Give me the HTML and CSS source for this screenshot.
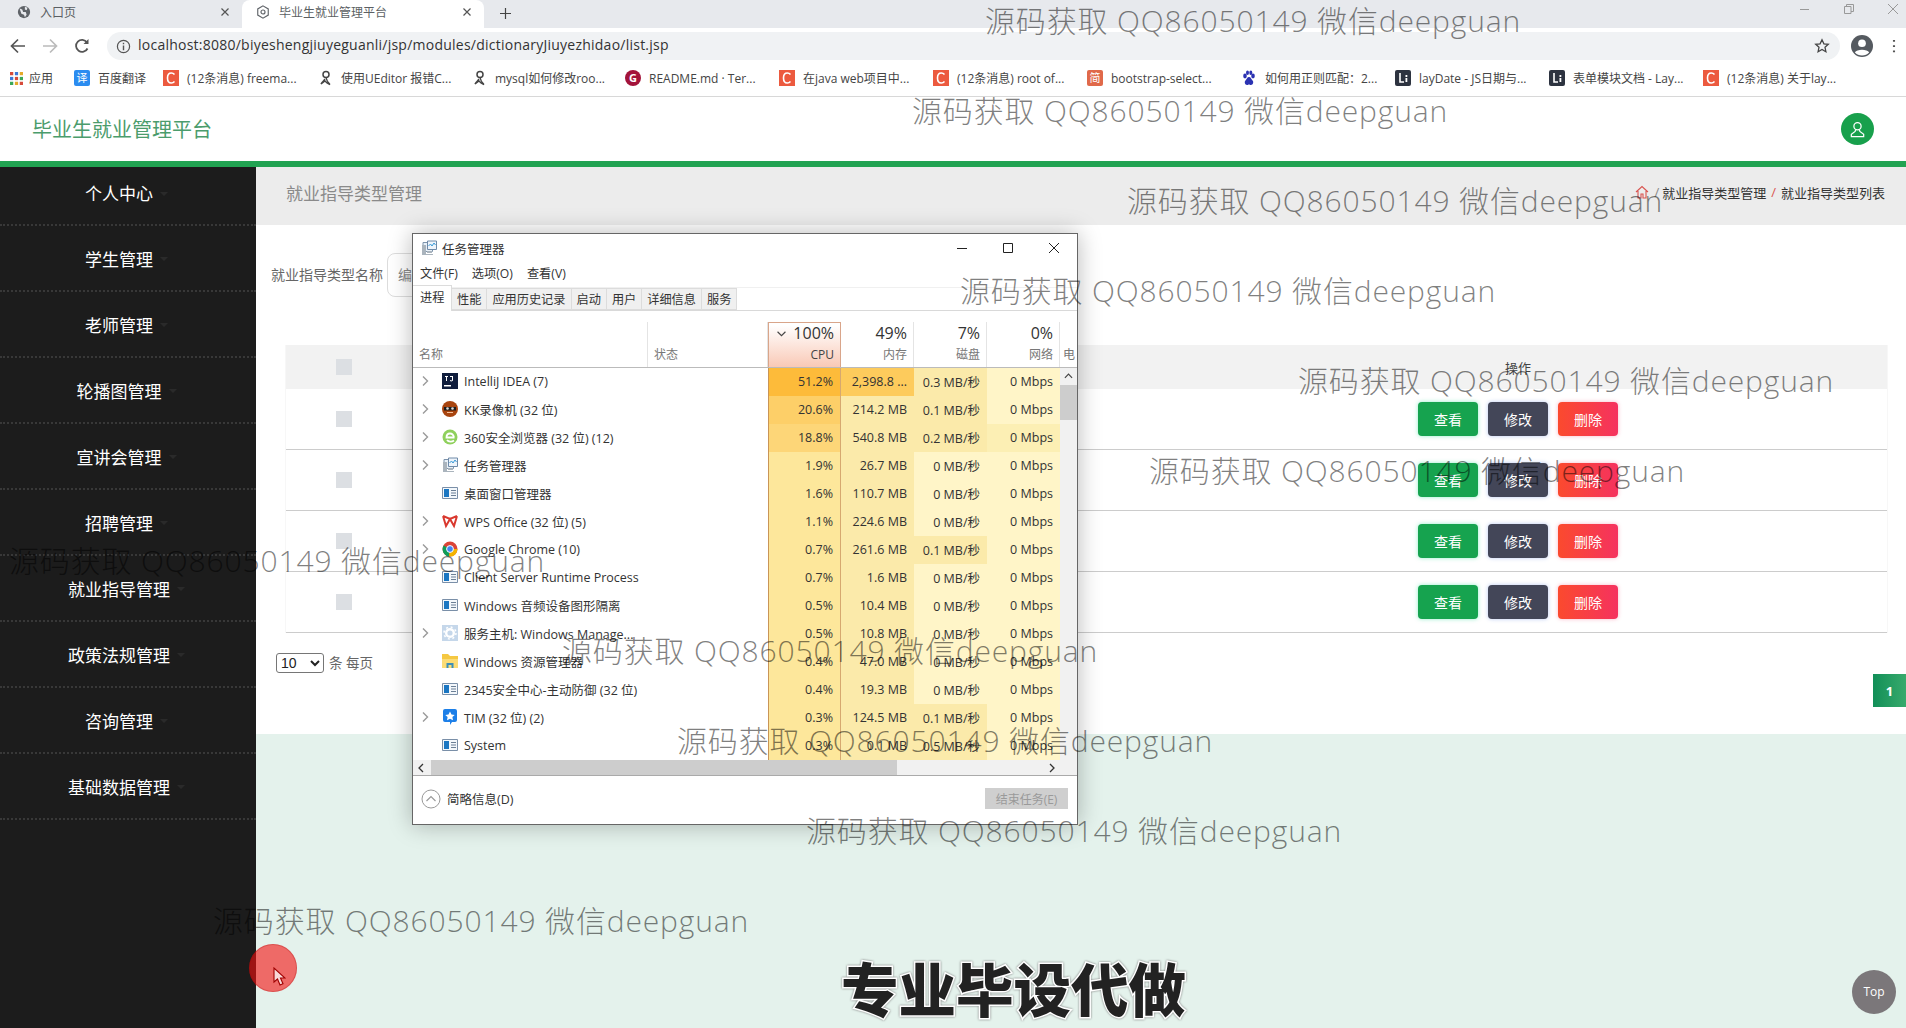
FILE: index.html
```html
<!DOCTYPE html>
<html lang="zh-CN">
<head>
<meta charset="utf-8">
<title>毕业生就业管理平台</title>
<link rel="stylesheet" href="styles.css">
</head>
<body>
<svg class="defs" aria-hidden="true">
  <symbol id="chev" viewBox="0 0 10 12"><path d="M3 1.500 7.500 6 3 10.500" fill="none" stroke="#9a9a9a" stroke-width="1.400"/></symbol>
  <symbol id="close" viewBox="0 0 10 10"><path d="M1.500 1.500l7 7m0-7-7 7" fill="none" stroke="#555" stroke-width="1.200"/></symbol>
  <symbol id="pp" viewBox="0 0 16 16"><path d="M2 2.500h9.500v9H2z" fill="#e8f0f8" stroke="#7d93ab"/><path d="M6.500 1h9v8.500h-9z" fill="#eef4fb" stroke="#6f8aa8"/><path d="M7.500 6l2-2 1.500 2 2-3 1.500 2" fill="none" stroke="#3a9bd8"/><path d="M1 5h4v10H1zM6 11h5v2H6zM5 14h7v1H5z" fill="#aab4bd"/></symbol>
  <symbol id="win" viewBox="0 0 16 16"><path d="M.5 2.500h15v11H.5z" fill="#f3f7fb" stroke="#7a8fa8"/><path d="M2 4h5v8H2z" fill="#1a76c2"/><path d="M9 5h5v1H9zM9 7.500h5v1H9zM9 10h5v1H9z" fill="#6b7f95"/></symbol>
  <symbol id="c" viewBox="0 0 16 16"><path d="M0 0h16v16H0z" fill="#ec5a3f"/><path d="M11.500 4.500C10.600 3.400 9.500 3 8.300 3 6 3 4.500 5 4.500 8s1.500 5 3.800 5c1.200 0 2.300-.4 3.200-1.500" fill="none" stroke="#fff" stroke-width="1.600"/></symbol>
  <symbol id="lay" viewBox="0 0 16 16"><rect width="16" height="16" rx="2" fill="#2d3340"/><path d="M5 3v9h4" fill="none" stroke="#fff" stroke-width="1.600"/><path d="M10.500 5h1.800v2h-1.800zM10.500 8h1.800v4h-1.800z" fill="#fff"/></symbol>
  <symbol id="ue" viewBox="0 0 16 16"><circle cx="9" cy="4.500" r="3" fill="none" stroke="#444" stroke-width="1.500"/><path d="M9 7.500c.5 3 2 5 4 7l-3-1.500-2-2-4 3c1-2 3-3.500 4-5" fill="none" stroke="#444" stroke-width="1.400"/></symbol>
</svg>

<div class="chrome">
  <div class="tabstrip">
    <div class="tab">
      <svg class="fav" viewBox="0 0 16 16"><circle cx="8" cy="8" r="7" fill="#5f6368"/><path d="M3 4l3 1 1 3 3 0 1 3-2 3-1-3-3-1zM9 2l3 1-1 3-2-1z" fill="#e7e9ed"/></svg>
      <span class="tab-title">入口页</span>
      <svg class="tab-x"><use href="#close"/></svg>
    </div>
    <div class="tab tab-on">
      <svg class="fav" viewBox="0 0 16 16"><path d="M8 1l6 3.500v7L8 15l-6-3.500v-7z" fill="none" stroke="#5f6368" stroke-width="1.300"/><circle cx="8" cy="8" r="2.300" fill="none" stroke="#5f6368" stroke-width="1.300"/></svg>
      <span class="tab-title">毕业生就业管理平台</span>
      <svg class="tab-x"><use href="#close"/></svg>
    </div>
    <svg class="plus" viewBox="0 0 12 12"><path d="M6 0v12M0 6h12" stroke="#444" stroke-width="1.300"/></svg>
    <div class="win-ctrls">
      <svg viewBox="0 0 10 10"><path d="M0 5.500h9" stroke="#999"/></svg>
      <svg viewBox="0 0 10 10"><path d="M.5 2.500h6.500v7H.5zM2.500 2.500V.5h7v7H7" fill="none" stroke="#999"/></svg>
      <svg viewBox="0 0 10 10"><path d="M0 0l10 10m0-10L0 10" stroke="#999"/></svg>
    </div>
  </div>
  <div class="toolbar">
    <svg class="nav" viewBox="0 0 16 16"><path d="M15 8H2m6-6.500L1.500 8 8 14.500" fill="none" stroke="#555" stroke-width="1.700"/></svg>
    <svg class="nav" viewBox="0 0 16 16"><path d="M1 8h13M8 1.500 14.500 8 8 14.500" fill="none" stroke="#bbb" stroke-width="1.700"/></svg>
    <svg class="nav nav-last" viewBox="0 0 16 16"><path d="M13.500 10.500A6 6 0 1 1 13 4.500" fill="none" stroke="#555" stroke-width="1.800"/><path d="M14.500 1v5h-5z" fill="#555"/></svg>
    <div class="omnibox">
      <svg class="info" viewBox="0 0 16 16"><circle cx="8" cy="8" r="6.500" fill="none" stroke="#555" stroke-width="1.300"/><path d="M8 7v5M8 4v1.600" stroke="#555" stroke-width="1.500"/></svg>
      <span class="url">localhost:8080/biyeshengjiuyeguanli/jsp/modules/dictionaryJiuyezhidao/list.jsp</span>
      <svg class="star" viewBox="0 0 16 16"><path d="M8 1.800l1.900 4 4.400.5-3.300 3 .9 4.400L8 11.500l-3.900 2.200.9-4.400-3.300-3 4.400-.5z" fill="none" stroke="#444" stroke-width="1.300"/></svg>
    </div>
    <svg class="avatar" viewBox="0 0 20 20"><circle cx="10" cy="10" r="10" fill="#555a60"/><circle cx="10" cy="7.500" r="3.500" fill="#fff"/><path d="M3.500 16c1.500-3.500 11.500-3.500 13 0-3 3.500-10 3.500-13 0z" fill="#fff"/></svg>
    <svg class="dots" viewBox="0 0 4 16"><path d="M2 1v2M2 7v2M2 13v2" stroke="#555" stroke-width="2.400"/></svg>
  </div>
  <div class="bookmarks">
    <div class="bm bm-apps">
      <svg class="bm-ico" viewBox="0 0 12 12"><path d="M0 0h3v3H0z" fill="#d64a3a"/><path d="M4.500 0h3v3h-3z" fill="#3d78d8"/><path d="M9 0h3v3H9z" fill="#e5a92a"/><path d="M0 4.500h3v3H0z" fill="#3d78d8"/><path d="M4.500 4.500h3v3h-3z" fill="#d64a3a"/><path d="M9 4.500h3v3H9z" fill="#3aa757"/><path d="M0 9h3v3H0z" fill="#3aa757"/><path d="M4.500 9h3v3h-3z" fill="#e5a92a"/><path d="M9 9h3v3H9z" fill="#d64a3a"/></svg>
      <span>应用</span>
    </div>
    <div class="bm bm-short"><i class="gl gl-blue">译</i><span>百度翻译</span></div>
    <div class="bm"><svg class="bm-ico"><use href="#c"/></svg><span>(12条消息) freema...</span></div>
    <div class="bm"><svg class="bm-ico"><use href="#ue"/></svg><span>使用UEditor 报错C...</span></div>
    <div class="bm"><svg class="bm-ico"><use href="#ue"/></svg><span>mysql如何修改roo...</span></div>
    <div class="bm"><i class="gl gl-g">G</i><span>README.md · Ter...</span></div>
    <div class="bm"><svg class="bm-ico"><use href="#c"/></svg><span>在java web项目中...</span></div>
    <div class="bm"><svg class="bm-ico"><use href="#c"/></svg><span>(12条消息) root of...</span></div>
    <div class="bm"><i class="gl gl-jian">简</i><span>bootstrap-select...</span></div>
    <div class="bm">
      <svg class="bm-ico" viewBox="0 0 16 16"><g fill="#2b32b2"><ellipse cx="4" cy="6" rx="1.800" ry="2.400"/><ellipse cx="12" cy="6" rx="1.800" ry="2.400"/><ellipse cx="6.500" cy="2.800" rx="1.500" ry="2.200"/><ellipse cx="9.800" cy="2.800" rx="1.500" ry="2.200"/><path d="M8 7c-2 0-2 2-3.500 3.500S4 15 6 15c1 0 1.300-.5 2-.5s1 .5 2 .5c2 0 3-3 1.500-4.500S10 7 8 7z"/></g></svg>
      <span>如何用正则匹配：2...</span>
    </div>
    <div class="bm"><svg class="bm-ico"><use href="#lay"/></svg><span>layDate - JS日期与...</span></div>
    <div class="bm"><svg class="bm-ico"><use href="#lay"/></svg><span>表单模块文档 - Lay...</span></div>
    <div class="bm"><svg class="bm-ico"><use href="#c"/></svg><span>(12条消息) 关于lay...</span></div>
  </div>
</div>

<header class="app-head">
  <div class="brand">毕业生就业管理平台</div>
  <div class="user-badge">
    <svg viewBox="0 0 20 20"><circle cx="10" cy="6.500" r="3.800" fill="none" stroke="#fff" stroke-width="1.300"/><path d="M8 10.500 7.500 12 3.500 15v2.500h13V15l-4-3-.5-1.500" fill="none" stroke="#fff" stroke-width="1.300"/></svg>
  </div>
</header>

<div class="app-body">
  <nav class="side">
    <div class="side-item side-first"><span class="side-label">个人中心</span></div>
    <div class="side-item"><span class="side-label">学生管理</span></div>
    <div class="side-item"><span class="side-label">老师管理</span></div>
    <div class="side-item"><span class="side-label">轮播图管理</span></div>
    <div class="side-item"><span class="side-label">宣讲会管理</span></div>
    <div class="side-item"><span class="side-label">招聘管理</span></div>
    <div class="side-item"><span class="side-label">就业指导管理</span></div>
    <div class="side-item"><span class="side-label">政策法规管理</span></div>
    <div class="side-item"><span class="side-label">咨询管理</span></div>
    <div class="side-item"><span class="side-label">基础数据管理</span></div>
  </nav>
  <main class="main">
    <div class="crumbbar">
      <div class="page-title">就业指导类型管理</div>
      <div class="crumbs">
        <svg class="home" viewBox="0 0 14 14"><path d="M1 7l6-5.500L13 7M3 6v7h3V9h2v4h3V6" fill="none" stroke="#d9534f" stroke-width="1.100"/></svg>
        <span class="sep">/</span><span>就业指导类型管理</span><span class="sep sep-red">/</span><span>就业指导类型列表</span>
      </div>
    </div>
    <section class="panel">
      <div class="search">
        <label class="search-label">就业指导类型名称</label>
        <div class="search-input">编</div>
      </div>
      <div class="table">
        <div class="t-row t-head"><div class="t-check"><i class="check"></i></div><div></div><div class="t-act">操作</div></div>
        <div class="t-row"><div class="t-check"><i class="check"></i></div><div></div><div class="t-act"><a class="btn btn-g">查看</a><a class="btn btn-d">修改</a><a class="btn btn-r">删除</a></div></div>
        <div class="t-row"><div class="t-check"><i class="check"></i></div><div></div><div class="t-act"><a class="btn btn-g">查看</a><a class="btn btn-d">修改</a><a class="btn btn-r">删除</a></div></div>
        <div class="t-row"><div class="t-check"><i class="check"></i></div><div></div><div class="t-act"><a class="btn btn-g">查看</a><a class="btn btn-d">修改</a><a class="btn btn-r">删除</a></div></div>
        <div class="t-row"><div class="t-check"><i class="check"></i></div><div></div><div class="t-act"><a class="btn btn-g">查看</a><a class="btn btn-d">修改</a><a class="btn btn-r">删除</a></div></div>
      </div>
      <div class="pager-size"><select class="size"><option>10</option></select><span>条 每页</span></div>
      <div class="pager"><span class="page-on">1</span></div>
    </section>
    <div class="mint"></div>
  </main>
</div>

<div class="tm">
  <div class="tm-title">
    <svg class="tm-i"><use href="#pp"/></svg><span>任务管理器</span>
    <div class="tm-ctrls">
      <svg viewBox="0 0 12 12"><path d="M1 6.500h10" stroke="#222"/></svg>
      <svg viewBox="0 0 12 12"><path d="M1.500 1.500h9v9h-9z" fill="none" stroke="#222"/></svg>
      <svg viewBox="0 0 12 12"><path d="M1 1l10 10m0-10L1 11" stroke="#222"/></svg>
    </div>
  </div>
  <div class="tm-menu"><span>文件(F)</span><span>选项(O)</span><span>查看(V)</span></div>
  <div class="tm-tabs"><span class="tm-tab tm-tab-on">进程</span><span class="tm-tab">性能</span><span class="tm-tab">应用历史记录</span><span class="tm-tab">启动</span><span class="tm-tab">用户</span><span class="tm-tab">详细信息</span><span class="tm-tab">服务</span></div>
  <div class="tm-head">
    <div class="th th-name"><span class="th-sub">名称</span></div>
    <div class="th th-state"><span class="th-sub">状态</span></div>
    <div class="th th-num th-cpu"><svg class="sort" viewBox="0 0 8 5"><path d="M.5.500 4 4 7.500.500" fill="none" stroke="#444"/></svg><span class="th-pct">100%</span><span class="th-sub th-sub-dark">CPU</span></div>
    <div class="th th-num"><span class="th-pct">49%</span><span class="th-sub">内存</span></div>
    <div class="th th-num"><span class="th-pct">7%</span><span class="th-sub">磁盘</span></div>
    <div class="th th-num"><span class="th-pct">0%</span><span class="th-sub">网络</span></div>
    <div class="th th-last"><span class="th-sub">电</span></div>
  </div>
  <div class="tm-mid">
    <div class="tm-rows">
      <div class="r"><div class="n"><svg class="ch"><use href="#chev"/></svg><svg class="pi" viewBox="0 0 16 16"><path d="M0 0h16v16H0z" fill="#0f1d3c"/><path d="M2 12h7v1.500H2z" fill="#fff"/><path d="M3 3h3v1H5v4H4V4H3zM8 3h3v4c0 1.500-2 1.800-3 1V7c1 .5 2 .5 2 0V4H8z" fill="#fff"/></svg><span>IntelliJ IDEA (7)</span></div><div></div><div class="v cpu h51">51.2%</div><div class="v h-mem1">2,398.8 ...</div><div class="v h2">0.3 MB/秒</div><div class="v h0">0 Mbps</div></div>
      <div class="r"><div class="n"><svg class="ch"><use href="#chev"/></svg><svg class="pi" viewBox="0 0 16 16"><circle cx="8" cy="8" r="8" fill="#a8440f"/><path d="M2 6h12v3.500H2z" fill="#1c1c1c"/><circle cx="5.500" cy="7.500" r="1.300" fill="#ddd"/><circle cx="10.500" cy="7.500" r="1.300" fill="#ddd"/><path d="M5 11.500h6" stroke="#f5c09a"/></svg><span>KK录像机 (32 位)</span></div><div></div><div class="v cpu h20">20.6%</div><div class="v h2">214.2 MB</div><div class="v h2">0.1 MB/秒</div><div class="v h0">0 Mbps</div></div>
      <div class="r"><div class="n"><svg class="ch"><use href="#chev"/></svg><svg class="pi" viewBox="0 0 16 16"><circle cx="8" cy="8" r="7.500" fill="#8fd05c"/><path d="M12.500 8.500H4.500C4.500 6 6 4.500 8 4.500s3.500 1.500 4 4zM5 11c1.500 2 5 2 7 .5" fill="none" stroke="#fff" stroke-width="1.800"/></svg><span>360安全浏览器 (32 位) (12)</span></div><div></div><div class="v cpu h18">18.8%</div><div class="v h2">540.8 MB</div><div class="v h2">0.2 MB/秒</div><div class="v h1">0 Mbps</div></div>
      <div class="r"><div class="n"><svg class="ch"><use href="#chev"/></svg><svg class="pi"><use href="#pp"/></svg><span>任务管理器</span></div><div></div><div class="v cpu h3">1.9%</div><div class="v h2">26.7 MB</div><div class="v h0">0 MB/秒</div><div class="v h0">0 Mbps</div></div>
      <div class="r"><div class="n"><i class="ch"></i><svg class="pi"><use href="#win"/></svg><span>桌面窗口管理器</span></div><div></div><div class="v cpu h3">1.6%</div><div class="v h2">110.7 MB</div><div class="v h0">0 MB/秒</div><div class="v h0">0 Mbps</div></div>
      <div class="r"><div class="n"><svg class="ch"><use href="#chev"/></svg><svg class="pi" viewBox="0 0 16 16"><path d="M1 3l3 10 4-7 4 7 3-10M1 3l7 3 7-3" fill="none" stroke="#d9382e" stroke-width="2"/></svg><span>WPS Office (32 位) (5)</span></div><div></div><div class="v cpu h3">1.1%</div><div class="v h2">224.6 MB</div><div class="v h0">0 MB/秒</div><div class="v h0">0 Mbps</div></div>
      <div class="r"><div class="n"><svg class="ch"><use href="#chev"/></svg><svg class="pi" viewBox="0 0 16 16"><circle cx="8" cy="8" r="7.500" fill="#db4437"/><path d="M8 8 1.500 4.500A7.500 7.500 0 0 0 7 15.500z" fill="#0f9d58"/><path d="M8 8h7.500A7.500 7.500 0 0 1 7 15.500z" fill="#f4b400"/><circle cx="8" cy="8" r="3.400" fill="#4285f4" stroke="#fff"/></svg><span>Google Chrome (10)</span></div><div></div><div class="v cpu h3">0.7%</div><div class="v h2">261.6 MB</div><div class="v h2">0.1 MB/秒</div><div class="v h0">0 Mbps</div></div>
      <div class="r"><div class="n"><i class="ch"></i><svg class="pi"><use href="#win"/></svg><span>Client Server Runtime Process</span></div><div></div><div class="v cpu h3">0.7%</div><div class="v h2">1.6 MB</div><div class="v h0">0 MB/秒</div><div class="v h0">0 Mbps</div></div>
      <div class="r"><div class="n"><i class="ch"></i><svg class="pi"><use href="#win"/></svg><span>Windows 音频设备图形隔离</span></div><div></div><div class="v cpu h3">0.5%</div><div class="v h2">10.4 MB</div><div class="v h0">0 MB/秒</div><div class="v h0">0 Mbps</div></div>
      <div class="r"><div class="n"><svg class="ch"><use href="#chev"/></svg><svg class="pi" viewBox="0 0 16 16"><path d="M0 0h16v16H0z" fill="#c5d7ea"/><circle cx="8" cy="8" r="3.800" fill="none" stroke="#fff" stroke-width="2.400"/><circle cx="8" cy="8" r="6" fill="none" stroke="#fff" stroke-width="1.500" stroke-dasharray="2 2.700"/></svg><span>服务主机: Windows Manage...</span></div><div></div><div class="v cpu h3">0.5%</div><div class="v h2">10.8 MB</div><div class="v h0">0 MB/秒</div><div class="v h0">0 Mbps</div></div>
      <div class="r"><div class="n"><i class="ch"></i><svg class="pi" viewBox="0 0 16 16"><path d="M0 1h6l2 2h8v12H0z" fill="#f5c842"/><path d="M0 6h16v9H0z" fill="#fbdc76"/><path d="M4.500 15v-5h7v5h-2v-3h-3v3z" fill="#3d8fb8"/></svg><span>Windows 资源管理器</span></div><div></div><div class="v cpu h3">0.4%</div><div class="v h2">47.0 MB</div><div class="v h0">0 MB/秒</div><div class="v h0">0 Mbps</div></div>
      <div class="r"><div class="n"><i class="ch"></i><svg class="pi"><use href="#win"/></svg><span>2345安全中心-主动防御 (32 位)</span></div><div></div><div class="v cpu h3">0.4%</div><div class="v h2">19.3 MB</div><div class="v h0">0 MB/秒</div><div class="v h0">0 Mbps</div></div>
      <div class="r"><div class="n"><svg class="ch"><use href="#chev"/></svg><svg class="pi" viewBox="0 0 16 16"><path d="M3 0h10a2 2 0 0 1 2 2v9a2 2 0 0 1-2 2h-3l-2 3v-3H3a2 2 0 0 1-2-2V2a2 2 0 0 1 2-2z" fill="#1c7fe8"/><path d="M8 2.500l1.500 3 3.200.4-2.300 2.200.6 3.200L8 9.800l-3 1.500.6-3.200-2.300-2.200 3.200-.4z" fill="#fff"/></svg><span>TIM (32 位) (2)</span></div><div></div><div class="v cpu h3">0.3%</div><div class="v h2">124.5 MB</div><div class="v h2">0.1 MB/秒</div><div class="v h0">0 Mbps</div></div>
      <div class="r"><div class="n"><i class="ch"></i><svg class="pi"><use href="#win"/></svg><span>System</span></div><div></div><div class="v cpu h3">0.3%</div><div class="v h2">0.1 MB</div><div class="v h2">0.5 MB/秒</div><div class="v h0">0 Mbps</div></div>
    </div>
    <div class="vscroll">
      <svg class="vs-up" viewBox="0 0 10 6"><path d="M1 5l4-4 4 4" fill="none" stroke="#444" stroke-width="1.300"/></svg>
      <i class="vs-thumb"></i>
    </div>
  </div>
  <div class="hscroll">
    <svg class="hs-a" viewBox="0 0 6 10"><path d="M5 1 1 5l4 4" fill="none" stroke="#333" stroke-width="1.300"/></svg>
    <i class="hs-thumb"></i>
    <svg class="hs-a hs-b" viewBox="0 0 6 10"><path d="M1 1l4 4-4 4" fill="none" stroke="#333" stroke-width="1.300"/></svg>
  </div>
  <div class="tm-foot">
    <svg class="fold" viewBox="0 0 20 20"><circle cx="10" cy="10" r="9" fill="none" stroke="#9a9a9a"/><path d="M5.500 12 10 7.500l4.500 4.500" fill="none" stroke="#9a9a9a" stroke-width="1.200"/></svg>
    <span>简略信息(D)</span>
    <span class="end-task">结束任务(E)</span>
  </div>
</div>

<div class="wm wm1">源码获取 QQ86050149 微信deepguan</div>
<div class="wm wm2">源码获取 QQ86050149 微信deepguan</div>
<div class="wm wm3">源码获取 QQ86050149 微信deepguan</div>
<div class="wm wm4">源码获取 QQ86050149 微信deepguan</div>
<div class="wm wm5">源码获取 QQ86050149 微信deepguan</div>
<div class="wm wm6">源码获取 QQ86050149 微信deepguan</div>
<div class="wm wm7">源码获取 QQ86050149 微信deepguan</div>
<div class="wm wm8">源码获取 QQ86050149 微信deepguan</div>
<div class="wm wm9">源码获取 QQ86050149 微信deepguan</div>
<div class="wm wm10">源码获取 QQ86050149 微信deepguan</div>
<div class="wm wm11">源码获取 QQ86050149 微信deepguan</div>

<div class="promo">专业毕设代做</div>
<div class="to-top">Top</div>
<div class="click-dot">
  <svg class="cursor" viewBox="0 0 13 19"><path d="M1 1v14l3.500-3 2.500 6 3-1.300-2.500-5.700H12z" fill="#f8d8d8" stroke="#a00000" stroke-width="1.100"/></svg>
</div>
</body>
</html>
```

FILE: styles.css
```css
* { box-sizing: border-box; }
html, body { margin: 0; height: 100%; }
body {
  position: relative;
  width: 1906px;
  height: 1028px;
  overflow: hidden;
  display: flex;
  flex-direction: column;
  background: #fff;
  font-family: "Open Sans", "Noto Sans CJK SC", sans-serif;
  color: #333;
}
.defs { position: absolute; width: 0; height: 0; }

/* browser chrome */
.chrome { flex: none; height: 97px; border-bottom: 1px solid #d8d8d8; }
.tabstrip { height: 28px; background: #e7e9ed; display: flex; align-items: flex-start; }
.tab { width: 242px; height: 28px; display: flex; align-items: center; padding: 0 0 4px 17px; font-size: 12px; color: #5b5f63; }
.tab-on { background: #fff; border-radius: 8px 8px 0 0; padding-left: 14px; }
.fav { width: 14px; height: 14px; flex: none; }
.tab-title { margin-left: 9px; flex: 1; }
.tab-x { width: 10px; height: 10px; flex: none; margin-right: 12px; }
.plus { width: 11px; height: 11px; margin: 8px 0 0 16px; }
.win-ctrls { margin-left: auto; display: flex; gap: 34px; padding: 4px 8px 0 0; }
.win-ctrls svg { width: 10px; height: 10px; }
.toolbar { height: 32px; padding-top: 4px; display: flex; align-items: center; background: #fff; padding-left: 10px; }
.nav { width: 16px; height: 16px; margin-right: 16px; flex: none; }
.nav-last { margin-right: 17px; }
.omnibox { width: 1733px; height: 28px; border-radius: 14px; background: #f0f2f4; display: flex; align-items: center; padding: 0 10px 0 9px; }
.info { width: 15px; height: 15px; flex: none; }
.url { margin-left: 7px; font-size: 14px; letter-spacing: .24px; color: #333; flex: 1; white-space: nowrap; line-height: 24px; padding-bottom: 2px; }
.star { width: 16px; height: 16px; flex: none; }
.avatar { width: 22px; height: 24px; margin-left: 11px; flex: none; }
.dots { width: 4px; height: 14px; margin-left: 19px; flex: none; }
.bookmarks { height: 36px; display: flex; align-items: center; padding: 0 0 0 10px; background: #fff; font-size: 12px; color: #444; }
.bm { width: 154px; display: flex; align-items: center; gap: 8px; white-space: nowrap; }
.bm-apps { width: 64px; gap: 6px; }
.bm-short { width: 89px; }
.bm-ico { width: 16px; height: 16px; flex: none; }
.bm-apps .bm-ico { width: 13px; height: 13px; }
.gl { width: 16px; height: 16px; flex: none; font-style: normal; font-size: 11px; line-height: 16px; text-align: center; color: #fff; border-radius: 2px; }
.gl-blue { background: #2b8cf0; }
.gl-g { background: #a3133a; border-radius: 50%; font-weight: 700; }
.gl-jian { background: #e0694a; }

/* app header */
.app-head { flex: none; height: 64px; display: flex; align-items: center; justify-content: space-between; padding: 0 32px; background: #fff; }
.brand { font-size: 20px; color: #4b9c6c; line-height: 64px; padding-top: 2px; }
.user-badge { width: 33px; height: 32px; border-radius: 50%; background: #18a04c; display: flex; align-items: center; justify-content: center; }
.user-badge svg { width: 19px; height: 19px; }
.app-body { flex: 1; display: flex; border-top: 6px solid #22a352; min-height: 0; }

/* sidebar */
.side { width: 256px; flex: none; background: #1c1c1c; }
.side-item { height: 66px; display: flex; align-items: center; justify-content: center; padding-right: 18px; border-bottom: 2px dotted #383838; color: #fff; font-size: 17px; }
.side-first { height: 59px; padding-bottom: 6px; }
.side-label { position: relative; }
.side-label::after { content: ""; position: absolute; right: -15px; top: 50%; margin-top: -1px; border: 4px solid transparent; border-top-color: #2a2a2a; }

/* main */
.main { flex: 1; display: flex; flex-direction: column; min-width: 0; }
.crumbbar { flex: none; height: 58px; background: #ececec; display: flex; align-items: center; justify-content: space-between; padding: 0 21px 8px 30px; }
.page-title { font-size: 17px; color: #8a8a8a; }
.crumbs { display: flex; align-items: center; font-size: 13px; color: #333; }
.home { width: 14px; height: 14px; margin-right: 2px; }
.sep { margin: 0 3px; color: #888; }
.sep-red { color: #d9534f; margin: 0 5px; }
.panel { flex: none; height: 509px; background: #fff; padding: 28px 19px 0 15px; }
.search { display: flex; align-items: center; height: 44px; }
.search-label { font-size: 14px; color: #666; width: 116px; padding-bottom: 3px; }
.search-input { width: 200px; height: 44px; border: 1px solid #ddd; border-radius: 8px; padding-left: 10px; line-height: 42px; font-size: 14px; color: #888; }
.table { margin: 48px 0 0 15px; }
.t-row { display: grid; grid-template-columns: 116px 1fr 738px; height: 61px; align-items: center; border-bottom: 1px solid #ccc; box-shadow: 1px 0 0 #f7f7f7, -1px 0 0 #f7f7f7; }
.t-head { height: 44px; border-bottom: 0; background: #f2f2f2; font-size: 13px; color: #444; }
.t-check { display: flex; justify-content: center; }
.check { width: 16px; height: 16px; background: #dcdfe3; display: block; }
.t-act { display: flex; justify-content: center; gap: 10px; }
.btn { width: 60px; height: 34px; border-radius: 4px; display: flex; align-items: center; justify-content: center; color: #fff; font-size: 14px; }
.btn-g { background: #16a34f; box-shadow: 0 0 4px rgba(40,220,150,.5); }
.btn-d { background: #434658; box-shadow: 0 0 4px rgba(80,120,220,.4); }
.btn-r { background: linear-gradient(90deg, #fb4a2e, #f5325f); box-shadow: 0 0 4px rgba(240,80,120,.4); }
.pager-size { display: flex; align-items: center; gap: 5px; margin: 20px 0 0 5px; height: 20px; font-size: 13.500px; color: #666; }
.pager-size span { padding-bottom: 2px; }
.size { width: 48px; height: 20px; font-size: 14px; font-family: "Liberation Sans", sans-serif; border: 1px solid #767676; border-radius: 3px; background: #fff; color: #222; padding: 0; }
.pager { display: flex; justify-content: flex-end; margin: 1px -19px 0 0; }
.page-on { width: 33px; height: 33px; display: flex; align-items: center; justify-content: center; background: linear-gradient(90deg, #128f58, #38aa6c); color: #fff; font-size: 13px; font-weight: 700; }
.mint { flex: 1; background: #e4f2ec; }

/* task manager */
.tm { position: absolute; left: 412px; top: 233px; width: 666px; height: 592px; background: #fff; border: 1px solid #666; box-shadow: 0 0 22px rgba(0,0,0,.28); display: flex; flex-direction: column; font-size: 12.500px; color: #333; }
.tm-title { height: 28px; flex: none; display: flex; align-items: center; padding-left: 8px; gap: 5px; font-size: 12.500px; }
.tm-i { width: 16px; height: 16px; }
.tm-ctrls { margin-left: auto; display: flex; gap: 34px; padding-right: 17px; }
.tm-ctrls svg { width: 12px; height: 12px; }
.tm-menu { height: 26px; flex: none; display: flex; align-items: center; gap: 14px; padding: 0 0 3px 7px; font-size: 12.200px; border-bottom: 1px solid #f0f0f0; }
.tm-tabs { height: 23px; flex: none; display: flex; border-bottom: 1px solid #d9d9d9; align-items: flex-end; font-size: 12.200px; }
.tm-tab { height: 22px; line-height: 21px; padding: 0 5px; background: #f0f0f0; border: 1px solid #dcdcdc; border-left: 0; white-space: nowrap; }
.tm-tab-on { width: 39px; height: 26px; background: #fff; border-bottom: 0; line-height: 24px; padding: 0 0 0 7px; position: relative; top: 1px; }
.tm-head { margin-top: 11px; height: 46px; flex: none; display: grid; grid-template-columns: 235px 120px 73px 73px 73px 73px 1fr; border-bottom: 1px solid #bbb; }
.th { position: relative; display: flex; flex-direction: column; justify-content: flex-end; border-right: 1px solid #e4e4e4; padding: 0 0 4px 6px; overflow: hidden; }
.th-sub { font-size: 12px; color: #777; line-height: 16px; }
.th-sub-dark { color: #444; }
.th-num { align-items: flex-end; padding-right: 6px; }
.th-pct { font-size: 16px; line-height: 22px; color: #333; margin-bottom: 3px; }
.th-cpu { background: linear-gradient(#fff 5%, #f9c9b6 100%); border: 1px solid #d9a58a; border-bottom: 0; }
.sort { position: absolute; left: 8px; top: 8px; width: 9px; height: 6px; }
.th-last { border-right: 0; padding-left: 3px; }
.tm-mid { flex: none; height: 392px; display: flex; overflow: hidden; }
.tm-rows { flex: none; width: 647px; }
.r { height: 28px; display: grid; grid-template-columns: 235px 120px 73px 73px 73px 73px; align-items: stretch; }
.n { display: flex; align-items: center; white-space: nowrap; padding-bottom: 2px; }
.ch { width: 10px; height: 12px; margin-left: 7px; flex: none; display: block; }
.pi { width: 16px; height: 16px; margin-left: 12px; flex: none; }
.n span { margin-left: 6px; }
.v { display: flex; align-items: center; justify-content: flex-end; padding: 0 7px 2px 0; white-space: nowrap; }
.cpu { border-left: 1px solid #c99556; border-right: 1px solid #d6a870; }
.h0 { background: #fff5c8; }
.h1 { background: #fcefb4; }
.h2 { background: #fbeaaa; }
.h3 { background: #fde79b; }
.h18 { background: #fdd678; }
.h20 { background: #fdcf68; }
.h51 { background: #fdbb3a; }
.h-mem1 { background: #fdcb5c; }
.vscroll { flex: 1; background: #f1f1f1; position: relative; display: flex; flex-direction: column; align-items: center; }
.vs-up { width: 9px; height: 6px; margin-top: 5px; }
.vs-thumb { width: 100%; height: 35px; margin-top: 6px; background: #cdcdcd; display: block; }
.hscroll { height: 16px; flex: none; background: #f1f1f1; display: flex; align-items: center; padding-right: 17px; border-bottom: 1px solid #aaa; position: relative; }
.hs-a { width: 6px; height: 10px; margin-left: 5px; flex: none; }
.hs-thumb { width: 466px; height: 100%; margin-left: 7px; background: #cdcdcd; display: block; }
.hs-b { margin-left: auto; margin-right: 5px; }
.tm-foot { flex: 1; display: flex; align-items: center; padding: 0 9px 3px 8px; font-size: 12.500px; }
.fold { width: 20px; height: 20px; margin-right: 6px; }
.end-task { margin-left: auto; width: 83px; height: 21px; background: #cfcfcf; color: #9a9a9a; font-size: 12px; display: flex; align-items: center; justify-content: center; }

/* watermarks */
.wm { position: absolute; font-size: 30px; line-height: 40px; white-space: nowrap; color: rgba(0,0,0,.5); pointer-events: none; font-weight: 300; letter-spacing: .85px; }
.wm1 { left: 985px; top: 1px; }
.wm2 { left: 912px; top: 91px; }
.wm3 { left: 1127px; top: 181px; }
.wm4 { left: 960px; top: 271px; }
.wm5 { left: 1298px; top: 361px; }
.wm6 { left: 1149px; top: 451px; }
.wm7 { left: 9px; top: 541px; }
.wm8 { left: 562px; top: 631px; }
.wm9 { left: 677px; top: 721px; }
.wm10 { left: 806px; top: 811px; }
.wm11 { left: 213px; top: 901px; }

.promo { position: absolute; left: 841px; top: 947px; font-size: 57.500px; line-height: 80px; font-weight: 900; font-family: "Noto Sans CJK SC", sans-serif; color: #222; -webkit-text-stroke: 3px #fff; paint-order: stroke fill; filter: drop-shadow(0 0 1px #777); white-space: nowrap; }
.to-top { position: absolute; left: 1852px; top: 970px; width: 44px; height: 44px; border-radius: 50%; background: #7b777a; color: #fff; font-size: 12px; display: flex; align-items: center; justify-content: center; padding-bottom: 2px; }
.click-dot { position: absolute; left: 249px; top: 944px; width: 48px; height: 48px; border-radius: 50%; background: rgba(245,15,15,.6); box-shadow: inset 0 0 0 1px rgba(160,0,0,.25); }
.cursor { position: absolute; left: 24px; top: 23px; width: 13px; height: 19px; }
```
